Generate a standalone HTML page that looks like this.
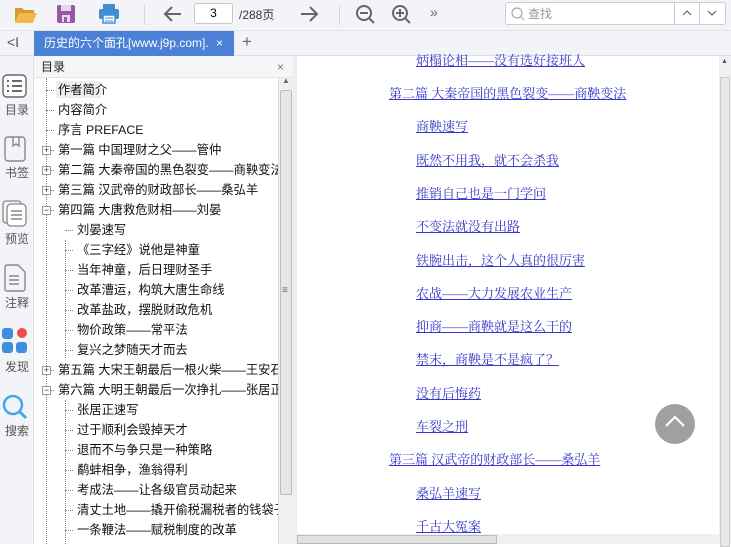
<!DOCTYPE html>
<html><head><meta charset="utf-8"><style>
*{margin:0;padding:0;box-sizing:border-box}
body{width:731px;height:544px;overflow:hidden;background:#fff;font-family:"Liberation Sans","Noto Sans CJK SC",sans-serif;position:relative}
.abs{position:absolute}
#tb{left:0;top:0;width:731px;height:31px;background:#f2f4f7;border-bottom:1px solid #e0e3e8}
#tabs{left:0;top:31px;width:731px;height:25px;background:#f2f4f7;border-bottom:1px solid #dde}
#tab{left:34px;top:31px;width:200px;height:25px;background:#4a80d6;color:#fff;font-size:12px;line-height:25px;padding-left:10px;white-space:nowrap}
#side{left:0;top:56px;width:34px;height:488px;background:#f2f4f7;border-right:1px solid #dcdfe4}
.sl{position:absolute;left:0;width:34px;text-align:center;font-size:12px;color:#555}
#toch{left:34px;top:56px;width:259px;height:22px;background:#f5f6f8;border-bottom:1px solid #e2e4e8;font-size:12px;line-height:22px;padding-left:7px;color:#222}
#tree{left:34px;top:78px;width:244px;height:466px;background:#fff;overflow:hidden}
.r{position:absolute;font-size:12.3px;color:#111;white-space:nowrap;line-height:16px}
.dv{position:absolute;border-left:1px dotted #888}
.dh{position:absolute;border-top:1px dotted #888;width:8px}
.pm{position:absolute;width:9px;height:9px;border:1px solid #999;background:#fff;font-size:9px;line-height:7px;text-align:center;color:#333}
#vs{left:278px;top:78px;width:15px;height:466px;background:#f0f0f0;border-left:1px solid #ddd}
#split{left:293px;top:56px;width:4px;height:488px;background:#eceef1}
#cont{left:297px;top:56px;width:422px;height:478px;background:#fff}
.a{position:absolute;font-family:"Liberation Serif","Noto Serif CJK SC",serif;font-size:13px;color:#3737c8;text-decoration:underline;white-space:nowrap}
#cvs{left:719px;top:56px;width:12px;height:488px;background:#f0f0f0}
#hs{left:297px;top:534px;width:422px;height:10px;background:#f0f0f0}
</style></head><body>
<div id="tb" class="abs">
<svg class="abs" style="left:14px;top:4px" width="24" height="20"><path d="M1 4h7l2 2h10v3H6L1 18z" fill="#d79a2e"/><path d="M5 9h18l-4 10H1z" fill="#f2b84a"/></svg>
<svg class="abs" style="left:57px;top:4px" width="19" height="20"><rect x="0" y="1" width="18" height="18" rx="2" fill="#9b56a8"/><rect x="4" y="1" width="10" height="6" fill="#e8d6ec"/><rect x="5" y="11" width="8" height="7" fill="#e8d6ec"/><rect x="7" y="13" width="3" height="5" fill="#9b56a8"/></svg>
<svg class="abs" style="left:98px;top:3px" width="22" height="22"><rect x="5" y="1" width="12" height="5" fill="#3f8fd2"/><rect x="1" y="6" width="20" height="10" rx="2" fill="#3f8fd2"/><rect x="5" y="12" width="12" height="8" fill="#fff" stroke="#3f8fd2" stroke-width="1.5"/><line x1="7" y1="15" x2="15" y2="15" stroke="#3f8fd2"/><line x1="7" y1="18" x2="15" y2="18" stroke="#3f8fd2"/></svg>
<div class="abs" style="left:144px;top:5px;width:1px;height:20px;background:#d5d8dc"></div>
<svg class="abs" style="left:163px;top:5px" width="20" height="18"><path d="M18 9H3M9 2L2 9l7 7" stroke="#666" stroke-width="2" fill="none"/></svg>
<div class="abs" style="left:194px;top:3px;width:39px;height:21px;border:1px solid #c8c8c8;border-radius:3px;background:#fff;font-size:12px;text-align:center;line-height:19px">3</div>
<div class="abs" style="left:239px;top:6px;font-size:12px;color:#333">/288页</div>
<svg class="abs" style="left:299px;top:5px" width="20" height="18"><path d="M2 9h15M11 2l7 7-7 7" stroke="#666" stroke-width="2" fill="none"/></svg>
<div class="abs" style="left:339px;top:5px;width:1px;height:20px;background:#d5d8dc"></div>
<svg class="abs" style="left:355px;top:4px" width="22" height="22"><circle cx="9" cy="9" r="7" stroke="#666" stroke-width="2" fill="none"/><path d="M5 9h8M14 14l5 5" stroke="#666" stroke-width="2"/></svg>
<svg class="abs" style="left:391px;top:4px" width="22" height="22"><circle cx="9" cy="9" r="7" stroke="#666" stroke-width="2" fill="none"/><path d="M5 9h8M9 5v8M14 14l5 5" stroke="#666" stroke-width="2"/></svg>
<div class="abs" style="left:430px;top:4px;font-size:14px;color:#666">»</div>
<div class="abs" style="left:505px;top:2px;width:221px;height:23px;border:1px solid #c8ccd2;border-radius:3px;background:#fff"></div>
<svg class="abs" style="left:510px;top:6px" width="16" height="16"><circle cx="7" cy="7" r="5" stroke="#aaa" fill="none" stroke-width="1.2"/><path d="M11 11l3 3" stroke="#aaa" stroke-width="1.2"/></svg>
<div class="abs" style="left:528px;top:5px;font-size:12px;color:#999">查找</div>
<div class="abs" style="left:674px;top:2px;width:1px;height:23px;background:#c8ccd2"></div>
<div class="abs" style="left:699px;top:2px;width:1px;height:23px;background:#c8ccd2"></div>
<svg class="abs" style="left:682px;top:9px" width="10" height="8"><path d="M1 6l4-4 4 4" stroke="#555" fill="none"/></svg>
<svg class="abs" style="left:707px;top:9px" width="10" height="8"><path d="M1 2l4 4 4-4" stroke="#555" fill="none"/></svg>
</div>
<div id="tabs" class="abs"><div class="abs" style="left:7px;top:3px;font-size:14px;color:#555">&lt;I</div><div class="abs" style="left:242px;top:1px;font-size:17px;color:#666">+</div></div>
<div id="tab" class="abs">历史的六个面孔[www.j9p.com].<span style="position:absolute;left:182px">×</span></div>
<div id="side" class="abs">
<svg class="abs" style="left:2px;top:18px" width="25" height="24"><rect x="1" y="1" width="23" height="22" rx="4" fill="#fff" stroke="#666" stroke-width="1.4"/><path d="M5 7h2M10 7h10M5 12h2M10 12h10M5 17h2M10 17h10" stroke="#555" stroke-width="1.8"/></svg>
<div class="sl" style="top:45px">目录</div>
<svg class="abs" style="left:4px;top:80px" width="22" height="26"><rect x="1" y="1" width="20" height="24" rx="3" fill="none" stroke="#888" stroke-width="1.4"/><path d="M9 1v9l3-2 3 2V1" fill="none" stroke="#888" stroke-width="1.4"/></svg>
<div class="sl" style="top:108px">书签</div>
<svg class="abs" style="left:2px;top:144px" width="26" height="28"><rect x="1" y="1" width="18" height="22" rx="3" fill="none" stroke="#888" stroke-width="1.3"/><rect x="5" y="4" width="19" height="22" rx="4" fill="#fff" stroke="#888" stroke-width="1.3"/><path d="M9 11h11M9 15h11M9 19h11" stroke="#888" stroke-width="1.5"/></svg>
<div class="sl" style="top:174px">预览</div>
<svg class="abs" style="left:3px;top:208px" width="24" height="28"><path d="M2 3a2 2 0 0 1 2-2h11l7 7v17a2 2 0 0 1-2 2H4a2 2 0 0 1-2-2z" fill="none" stroke="#888" stroke-width="1.4"/><path d="M6 12h10M6 16h10M6 20h10" stroke="#888" stroke-width="1.5"/></svg>
<div class="sl" style="top:238px">注释</div>
<svg class="abs" style="left:2px;top:272px" width="26" height="26"><rect x="0" y="0" width="11" height="11" rx="3" fill="#3f8fe0"/><circle cx="20" cy="5" r="5" fill="#f04a4a"/><rect x="0" y="14" width="11" height="11" rx="3" fill="#3f8fe0"/><rect x="14" y="14" width="11" height="11" rx="3" fill="#3f8fe0"/></svg>
<div class="sl" style="top:302px">发现</div>
<svg class="abs" style="left:2px;top:338px" width="26" height="26"><circle cx="11" cy="11" r="9" fill="none" stroke="#3fa9e8" stroke-width="2.5"/><path d="M18 18l6 6" stroke="#3fa9e8" stroke-width="3"/></svg>
<div class="sl" style="top:366px">搜索</div>
</div>
<div id="toch" class="abs">目录<span style="position:absolute;left:243px;color:#777">×</span></div>
<div id="tree" class="abs">
<div class="dv" style="left:12px;top:0;height:466px"></div>
<div class="dv" style="left:31px;top:162px;height:118px"></div>
<div class="dv" style="left:31px;top:322px;height:144px"></div>
<div class="abs" style="left:22px;top:3px;width:45px;height:17px;background:#eee"></div>
</div>
<div id="vs" class="abs"><div class="abs" style="left:1px;top:12px;width:12px;height:405px;background:#e6e6e6;border:1px solid #bbb;border-radius:2px"></div><div class="abs" style="left:3px;top:207px;font-size:10px;color:#666">≡</div><div class="abs" style="left:3px;top:-2px;font-size:8px;color:#666">▲</div></div>
<div id="split" class="abs"></div>
<div id="cont" class="abs">
<div class="a" style="left:119px;top:-6px">炳榻论相——没有选好接班人</div>
</div>
<div id="cvs" class="abs"><div class="abs" style="left:2px;top:2px;font-size:7px;color:#555">▲</div><div class="abs" style="left:1px;top:21px;width:10px;height:470px;background:#e8e8e8;border:1px solid #ccc"></div></div>
<div id="hs" class="abs"><div class="abs" style="left:0;top:1px;width:200px;height:9px;background:#e2e2e2;border:1px solid #bbb"></div></div>
<div class="abs" style="left:655px;top:404px;width:40px;height:40px;border-radius:50%;background:#a0a0a0"></div>
<svg class="abs" style="left:664px;top:414px" width="22" height="14"><path d="M2 12l9-9 9 9" stroke="#fff" stroke-width="2.2" fill="none"/></svg>
<script>
var t=[[0,'作者简介'],[0,'内容简介'],[0,'序言 PREFACE'],[2,'第一篇 中国理财之父——管仲'],[2,'第二篇 大秦帝国的黑色裂变——商鞅变法'],[2,'第三篇 汉武帝的财政部长——桑弘羊'],[3,'第四篇 大唐救危财相——刘晏'],[1,'刘晏速写'],[1,'《三字经》说他是神童'],[1,'当年神童，后日理财圣手'],[1,'改革漕运，构筑大唐生命线'],[1,'改革盐政，摆脱财政危机'],[1,'物价政策——常平法'],[1,'复兴之梦随天才而去'],[2,'第五篇 大宋王朝最后一根火柴——王安石'],[3,'第六篇 大明王朝最后一次挣扎——张居正'],[1,'张居正速写'],[1,'过于顺利会毁掉天才'],[1,'退而不与争只是一种策略'],[1,'鹬蚌相争，渔翁得利'],[1,'考成法——让各级官员动起来'],[1,'清丈土地——撬开偷税漏税者的钱袋子'],[1,'一条鞭法——赋税制度的改革']];
var tr=document.getElementById('tree'),h='';
t.forEach(function(e,i){var y=4+i*20,c=e[0]==1;var x=c?43:24;
h+='<div class="dh" style="left:'+(c?31:12)+'px;top:'+(y+8)+'px"></div>';
if(e[0]>=2)h+='<div class="pm" style="left:8px;top:'+(y+4)+'px">'+(e[0]==2?'+':'−')+'</div>';
h+='<div class="r" style="left:'+x+'px;top:'+y+'px">'+e[1]+'</div>';});
tr.insertAdjacentHTML('beforeend',h);
var c=[[0,'第二篇 大秦帝国的黑色裂变——商鞅变法'],[1,'商鞅速写'],[1,'既然不用我，就不会杀我'],[1,'推销自己也是一门学问'],[1,'不变法就没有出路'],[1,'铁腕出击，这个人真的很厉害'],[1,'农战——大力发展农业生产'],[1,'抑商——商鞅就是这么干的'],[1,'禁末，商鞅是不是疯了？'],[1,'没有后悔药'],[1,'车裂之刑'],[0,'第三篇 汉武帝的财政部长——桑弘羊'],[1,'桑弘羊速写'],[1,'千古大冤案']];
var co=document.getElementById('cont');h='';
c.forEach(function(e,i){h+='<div class="a" style="left:'+(e[0]?119:92)+'px;top:'+(27+i*33.3)+'px">'+e[1]+'</div>';});
co.insertAdjacentHTML('beforeend',h);
</script>
</body></html>
